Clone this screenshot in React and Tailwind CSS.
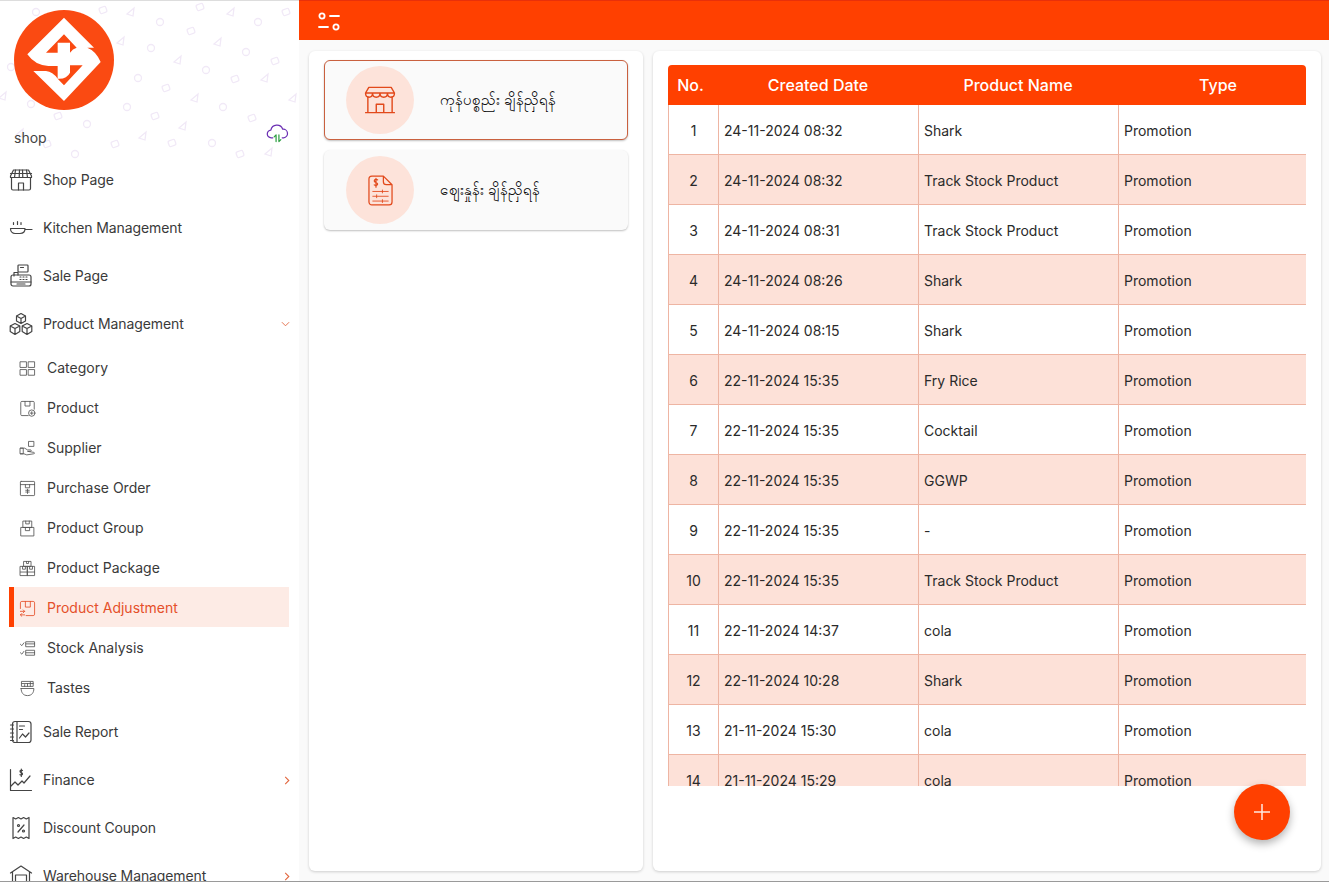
import React from 'react';

// Iconos dibujados a mano
const Svg = ({ className, children, strokeWidth = 1.2 }) => (
  <svg viewBox="0 0 24 24" fill="none" stroke="currentColor" strokeWidth={strokeWidth} strokeLinecap="round" strokeLinejoin="round" className={className}>
    {children}
  </svg>
);

const ShopIcon = (p) => (
  <Svg {...p}>
    <path d="M4.500 2h15l3 6v1.500h-21V8z" />
    <path d="M1.500 5.500h21M6.500 2l-1 7.500M10.500 2l-.3 7.500M13.500 2l.3 7.500M17.500 2l1 7.500" />
    <path d="M2.500 9.500v11a1.500 1.500 0 0 0 1.500 1.500h16a1.500 1.500 0 0 0 1.500-1.500v-11" />
    <path d="M9.500 22v-7h5v7" />
  </Svg>
);
const KitchenIcon = (p) => (
  <Svg {...p}>
    <path d="M1.500 12.500h14.500c0 3-2 5-5 5h-5c-2.500 0-4.500-2-4.500-5zM16 13.500h7" />
    <path d="M4.500 6.500v2M8.500 5.500v3M12 6.500v2" />
  </Svg>
);
const SaleIcon = (p) => (
  <Svg {...p}>
    <rect x="9" y="1" width="10" height="7" rx=".8" />
    <path d="M11.500 3.500h3M5 12V8.500h4V11" />
    <rect x="2" y="11" width="20" height="11" rx="2" />
    <path d="M2 18h20M8 20h8M11 13h1M14 13h1M17 13h1M11 15.500h1M14 15.500h1M17 15.500h1" />
  </Svg>
);
const BoxesIcon = (p) => (
  <Svg {...p}>
    <path d="M12 1.500l4.500 2.500v5L12 11.500 7.500 9V4zM7.500 4l4.500 2.500L16.500 4M12 6.500v5" />
    <path d="M6 11.500l4.800 2.500v5.500L6 22.500l-4.800-3V14zM1.200 14L6 16.500 10.800 14M6 16.500v6" />
    <path d="M18 11.500l4.800 2.500v5.500L18 22.500l-4.800-3V14zM13.200 14l4.800 2.500 4.800-2.500M18 16.500v6" />
  </Svg>
);
const CategoryIcon = (p) => (
  <Svg {...p}>
    <rect x="2" y="2.500" width="8.500" height="8" />
    <rect x="13.500" y="2.500" width="8.500" height="8" />
    <rect x="2" y="13.500" width="8.500" height="8" />
    <rect x="13.500" y="13.500" width="8.500" height="8" />
  </Svg>
);
const ProductIcon = (p) => (
  <Svg {...p}>
    <path d="M13 22H4a1.500 1.500 0 0 1-1.500-1.500v-17A1.500 1.500 0 0 1 4 2h16a1.500 1.500 0 0 1 1.500 1.500V13" />
    <path d="M8.500 2v6.500h7V2" />
    <circle cx="18" cy="18.500" r="4.500" />
    <path d="M18 16.500v4M16 18.500h4" />
  </Svg>
);
const SupplierIcon = (p) => (
  <Svg {...p}>
    <rect x="14" y="2" width="7" height="7" />
    <path d="M2 11.500h6l4 2.500h4.500c1 0 1 2 0 2H12l9 1.500c1.500.5 1 2-.5 2L11 21l-4-1.500H2z" />
    <path d="M2 11.500h4v8H2" />
  </Svg>
);
const PurchaseIcon = (p) => (
  <Svg {...p}>
    <rect x="2" y="2" width="20" height="20" rx="1" />
    <path d="M2 6.500h20M9 6.500v4.500h6V6.500M12 13v6M9.500 14.500h5M9.500 17h5" />
  </Svg>
);
const GroupIcon = (p) => (
  <Svg {...p}>
    <rect x="6" y="1.500" width="12" height="9" />
    <rect x="3" y="10.500" width="18" height="12" />
    <path d="M9.500 1.500v4h5v-4M9 10.500v4.500h6v-4.500" />
  </Svg>
);
const PackageIcon = (p) => (
  <Svg {...p}>
    <rect x="7" y="2" width="10" height="7" />
    <rect x="2" y="9" width="10" height="13" />
    <rect x="12" y="9" width="10" height="13" />
    <path d="M10.500 2v3h3V2M5 9v4h4V9M15 9v4h4V9M2 17h20" />
  </Svg>
);
const AdjustIcon = (p) => (
  <Svg {...p}>
    <path d="M2 12V4a2 2 0 0 1 2-2h16a2 2 0 0 1 2 2v16a2 2 0 0 1-2 2H10" />
    <path d="M9 2v8h7V2" />
    <path d="M2 16h6M6 14l2 2-2 2M8 21H2M4 19l-2 2 2 2" />
  </Svg>
);
const StockIcon = (p) => (
  <Svg {...p}>
    <rect x="10" y="2.500" width="12" height="7" />
    <rect x="10" y="14.500" width="12" height="7" />
    <path d="M10 5.500h12M10 18h12M2 6l2 2 3-4M2 18l2 2 3-4" />
  </Svg>
);
const TastesIcon = (p) => (
  <Svg {...p}>
    <path d="M3 12h18c0 6-3 10-9 10S3 18 3 12z" />
    <rect x="4" y="2" width="16" height="7" />
    <path d="M4 5h16M8 9V6.500M12 9V5M16 9V3" />
  </Svg>
);
const ReportIcon = (p) => (
  <Svg {...p}>
    <rect x="3.500" y="1.500" width="18.500" height="21" rx="2.500" />
    <path d="M1.500 5h3M1.500 9h3M1.500 13h3M1.500 17h3M1.500 20.500h3M8 1.500v21" />
    <path d="M10.500 6h5M10.500 9.500h3M10.500 18l3-4 3 3 3.500-4" />
  </Svg>
);
const FinanceIcon = (p) => (
  <Svg {...p}>
    <path d="M1.500 1.500v21h21" />
    <path d="M2 18l4-4 3 3 4-4 2 2 6-7" />
    <path d="M13.500 2.500c-1-.7-2.500-.3-2.500.7 0 1.800 2.500 1 2.500 2.800 0 1-1.500 1.400-2.500.7M12.300 1v7.500" />
  </Svg>
);
const CouponIcon = (p) => (
  <Svg {...p}>
    <path d="M4 1.500l2.700 1.500 2.700-1.500 2.600 1.500 2.600-1.500 2.700 1.500L20 1.500v21l-2.700-1.500-2.700 1.500L12 21l-2.600 1.500L6.700 21 4 22.500z" />
    <path d="M15 9l-6 7" />
    <circle cx="9.500" cy="9.500" r="1" />
    <circle cx="14.500" cy="15" r="1" />
  </Svg>
);
const WarehouseIcon = (p) => (
  <Svg {...p}>
    <path d="M1.500 9L12 2l10.500 7M3.500 8v15M20.500 8v15M6.500 23V11h11v12" />
    <path d="M9 18h6v5H9zM12 18v2" />
  </Svg>
);
const ChevronDown = () => (
  <svg viewBox="0 0 10 6" className="w-[9px] h-[6px] text-[#e2673f]" fill="none" stroke="currentColor" strokeWidth="1">
    <path d="M1 1l4 4 4-4" />
  </svg>
);
const ChevronRight = () => (
  <svg viewBox="0 0 6 10" className="w-[6px] h-[9px] text-[#e2673f]" fill="none" stroke="currentColor" strokeWidth="1.200">
    <path d="M1 1l4 4-4 4" />
  </svg>
);

// Logo de la tienda
const Logo = () => (
  <svg viewBox="0 0 324 324" className="w-[108px] h-[108px]">
    <circle cx="162" cy="162" r="150" fill="#fa4a12" />
    <path
      fill="#fff"
      fillRule="evenodd"
      d="M162 35L252 125L232 125Q258 135 272 168L162 285L70 195L108 195Q128 197 143 218L143 180L115 180Q75 178 52 145Z
         M162 85L200 125Q188 128 180 140L180 110L143 110L143 140L108 140Z
         M180 178L218 178L162 238L143 218Q170 220 180 200Z"
    />
  </svg>
);

// Fondo con garabatos de la cabecera
const doodles = [
  [36, 11], [103, 9], [131, 11], [160, 21], [200, 6], [231, 11], [258, 21], [286, 11], [121, 40], [151, 47], [191, 30], [218, 41],
  [246, 51], [275, 60], [178, 59], [206, 69], [235, 78], [265, 77], [138, 77], [166, 87], [195, 97], [223, 106], [252, 117],
  [293, 97], [127, 106], [155, 115], [183, 125], [212, 142], [240, 153], [269, 151], [87, 123], [115, 143], [143, 135],
  [75, 153], [47, 143], [20, 132], [31, 103], [58, 115], [3, 95], [11, 66], [172, 142],
];

const Doodles = () => (
  <svg className="absolute inset-0 w-[299px] h-[160px]" viewBox="0 0 299 160" fill="none" stroke="#f1e9f7" strokeWidth="1.300">
    {doodles.map(([x, y], i) =>
      i % 3 === 0 ? (
        <circle key={i} cx={x} cy={y} r="3.500" />
      ) : i % 3 === 1 ? (
        <rect key={i} x={x - 3.5} y={y - 3} width="7" height="6" rx="1.500" transform={`rotate(-20 ${x} ${y})`} />
      ) : (
        <path key={i} d={`M${x - 4} ${y + 2}L${x + 3} ${y - 4}L${x + 2} ${y + 4}Z`} />
      )
    )}
  </svg>
);

const topItems = [
  { label: 'Shop Page', icon: ShopIcon },
  { label: 'Kitchen Management', icon: KitchenIcon },
  { label: 'Sale Page', icon: SaleIcon },
  { label: 'Product Management', icon: BoxesIcon, chevron: 'down' },
];

const subItems = [
  { label: 'Category', icon: CategoryIcon },
  { label: 'Product', icon: ProductIcon },
  { label: 'Supplier', icon: SupplierIcon },
  { label: 'Purchase Order', icon: PurchaseIcon },
  { label: 'Product Group', icon: GroupIcon },
  { label: 'Product Package', icon: PackageIcon },
  { label: 'Product Adjustment', icon: AdjustIcon, active: true },
  { label: 'Stock Analysis', icon: StockIcon },
  { label: 'Tastes', icon: TastesIcon },
];

const bottomItems = [
  { label: 'Sale Report', icon: ReportIcon },
  { label: 'Finance', icon: FinanceIcon, chevron: 'right' },
  { label: 'Discount Coupon', icon: CouponIcon },
  { label: 'Warehouse Management', icon: WarehouseIcon, chevron: 'right' },
];

const rows = [
  ['24-11-2024 08:32', 'Shark'],
  ['24-11-2024 08:32', 'Track Stock Product'],
  ['24-11-2024 08:31', 'Track Stock Product'],
  ['24-11-2024 08:26', 'Shark'],
  ['24-11-2024 08:15', 'Shark'],
  ['22-11-2024 15:35', 'Fry Rice'],
  ['22-11-2024 15:35', 'Cocktail'],
  ['22-11-2024 15:35', 'GGWP'],
  ['22-11-2024 15:35', '-'],
  ['22-11-2024 15:35', 'Track Stock Product'],
  ['22-11-2024 14:37', 'cola'],
  ['22-11-2024 10:28', 'Shark'],
  ['21-11-2024 15:30', 'cola'],
  ['21-11-2024 15:29', 'cola'],
];

const MenuItem = ({ item }) => {
  const Icon = item.icon;
  return (
    <div className="h-12 flex items-center pl-[9px] pr-[9px] text-[#3a3a3a]">
      <Icon className="w-6 h-6 shrink-0 text-[#444]" />
      <span className="ml-[10px] flex-1 tracking-[-0.1px]">{item.label}</span>
      {item.chevron === 'down' && <ChevronDown />}
      {item.chevron === 'right' && <ChevronRight />}
    </div>
  );
};

const SubItem = ({ item }) => {
  const Icon = item.icon;
  return (
    <div
      className={
        item.active
          ? 'h-10 pt-[2px] flex items-center ml-[9px] mr-[10px] pl-[5px] border-l-[5px] border-[#ff4000] bg-[#fdebe5] text-[#e5502a]'
          : 'h-10 pt-[2px] flex items-center ml-[9px] mr-[10px] pl-[10px] text-[#3a3a3a]'
      }
    >
      <Icon className={item.active ? 'w-[17px] h-[17px] shrink-0 text-[#e5502a]' : 'w-[17px] h-[17px] shrink-0 text-[#555]'} />
      <span className="ml-[11px]">{item.label}</span>
    </div>
  );
};

const Sidebar = () => (
  <aside className="relative w-[299px] shrink-0 h-full overflow-hidden bg-white border-t border-[#dddddd] text-sm">
    <Doodles />
    <div className="relative h-[155px]">
      <div className="pt-[5px] pl-[10px]">
        <Logo />
      </div>
      <div className="flex items-center justify-between pl-[14px] pr-[10px] mt-[14px]">
        <span className="text-[#444]">shop</span>
        <svg viewBox="0 0 24 20" className="w-[23px] h-[19px] -mt-[10px]" fill="none" strokeWidth="1.300" strokeLinecap="round" strokeLinejoin="round">
          <path stroke="#6b2fb3" d="M7 14.500H5.500a4 4 0 0 1-.5-8 6.500 6.500 0 0 1 12.500-1 4.500 4.500 0 0 1 1 9H17" />
          <path stroke="#2ea043" d="M10.500 18.500v-7M8.500 13.500l2-2M13.500 11.500v7M13.500 18.500l2-2" />
        </svg>
      </div>
    </div>
    <div className="relative">
      {topItems.map((item) => (
        <MenuItem key={item.label} item={item} />
      ))}
      <div className="-mt-px mb-px">
        {subItems.map((item) => (
          <SubItem key={item.label} item={item} />
        ))}
      </div>
      {bottomItems.map((item) => (
        <MenuItem key={item.label} item={item} />
      ))}
    </div>
  </aside>
);

const AdjustCard = ({ selected, icon, text }) => (
  <div
    className={
      selected
        ? 'h-20 flex items-center rounded-md border border-[#c9603f] bg-[#fafafa] pl-[21px] shadow-[0_1px_2px_rgba(0,0,0,0.25)]'
        : 'h-20 flex items-center rounded-md bg-[#fafafa] pl-[22px] shadow-[0_1px_2px_rgba(0,0,0,0.25)]'
    }
  >
    <div className="w-[68px] h-[68px] rounded-full bg-[#fde3da] flex items-center justify-center shrink-0 text-[#e2491b]">
      {icon}
    </div>
    <span className="ml-[26px] mt-px text-[15px] text-black">{text}</span>
  </div>
);

const StoreIcon = () => (
  <svg viewBox="0 0 34 30" className="w-[32px] h-[28px]" fill="none" stroke="currentColor" strokeWidth="1.500" strokeLinejoin="round">
    <path d="M5 1.500h24l3.500 6H1.500zM1.500 7.500c0 6 7.500 6 7.500 0 0 6 8 6 8 0 0 6 8 6 8 0 0 6 7.500 6 7.500 0" />
    <path d="M4 11v17M30 11v17M1 28.500h32M13 28V19.500h8V28" />
  </svg>
);

const PriceIcon = () => (
  <svg viewBox="0 0 26 32" className="w-[25px] h-[31px]" fill="none" stroke="currentColor" strokeWidth="1.300" strokeLinejoin="round" strokeLinecap="round">
    <path d="M4 1h12l9 9v18a3 3 0 0 1-3 3H4a3 3 0 0 1-3-3V4a3 3 0 0 1 3-3zM16 1v6a3 3 0 0 0 3 3h6" />
    <path d="M10 5c-1-1-3.500-.8-3.500 1 0 2 3.500 1.300 3.500 3.200 0 1.600-2.500 2-3.500 1M8.300 3.500v9" />
    <path d="M5 17h16M15 15.500v3M5 22h16M9 20.500v3M5 27h16M15 25.500v3" strokeWidth="0.900" />
  </svg>
);

const cellClass = 'border-l border-b border-[#eeb5a3] pl-[5px] pt-[2px]';

const DataTable = () => (
  <div className="h-[721px] overflow-hidden rounded-t-[4px]">
    <table className="w-[650px] table-fixed border-separate border-spacing-0 text-sm text-[#2a2a2a]">
      <colgroup>
        <col className="w-[50px]" />
        <col className="w-[200px]" />
        <col className="w-[200px]" />
        <col className="w-[200px]" />
      </colgroup>
      <thead>
        <tr className="h-10 bg-[#ff4000] text-white text-base">
          <th className="font-medium pr-[5px]">No.</th>
          <th className="font-medium">Created Date</th>
          <th className="font-medium">Product Name</th>
          <th className="font-medium">Type</th>
        </tr>
      </thead>
      <tbody>
        {rows.map(([date, name], i) => (
          <tr key={i} className={i % 2 === 1 ? 'h-[50px] bg-[#fde1d8]' : 'h-[50px] bg-white'}>
            <td className="border-l border-b border-[#eeb5a3] pt-[2px] text-center">{i + 1}</td>
            <td className={cellClass}>{date}</td>
            <td className={cellClass}>{name}</td>
            <td className={cellClass}>Promotion</td>
          </tr>
        ))}
      </tbody>
    </table>
  </div>
);

export default function App() {
  return (
    <div className="w-screen h-screen flex overflow-hidden bg-white border-b border-[#9a9a9a] font-['Inter','Noto_Sans',sans-serif]">
      <Sidebar />
      <div className="flex-1 min-w-0 flex flex-col bg-[#fafafa]">
        <header className="h-10 shrink-0 bg-[#ff4000] border-t border-[#e8300a] flex items-center pl-[18px]">
          <svg viewBox="0 0 24 22" className="w-[24px] h-[22px]" fill="none" stroke="#fff" strokeWidth="1.800" strokeLinecap="round">
            <circle cx="5" cy="6" r="2.600" />
            <path d="M13 6h9M2 17h9" />
            <circle cx="19" cy="17" r="2.600" />
          </svg>
        </header>
        <main className="flex-1 min-h-0 flex gap-[10px] pt-[11px] pb-[10px] pl-[10px] pr-[8px]">
          <section className="w-[334px] shrink-0 bg-white rounded-md shadow-[0_1px_3px_rgba(0,0,0,0.18)] px-[15px] pt-[9px] flex flex-col gap-[10px]">
            <AdjustCard selected icon={<StoreIcon />} text="ကုန်ပစ္စည်း ချိန်ညှိရန်" />
            <AdjustCard icon={<PriceIcon />} text="ဈေးနှုန်း ချိန်ညှိရန်" />
          </section>
          <section className="relative flex-1 min-w-0 bg-white rounded-md shadow-[0_1px_3px_rgba(0,0,0,0.18)] pt-[14px] pl-[15px] pr-[15px]">
            <DataTable />
            <button className="absolute right-[31px] bottom-[31px] w-14 h-14 rounded-full bg-[#ff4000] flex items-center justify-center shadow-[0_4px_8px_rgba(0,0,0,0.3)]">
              <svg viewBox="0 0 20 20" className="w-5 h-5" fill="none" stroke="#ffe9e0" strokeWidth="1.500">
                <path d="M10 2v16M2 10h16" />
              </svg>
            </button>
          </section>
        </main>
      </div>
    </div>
  );
}
